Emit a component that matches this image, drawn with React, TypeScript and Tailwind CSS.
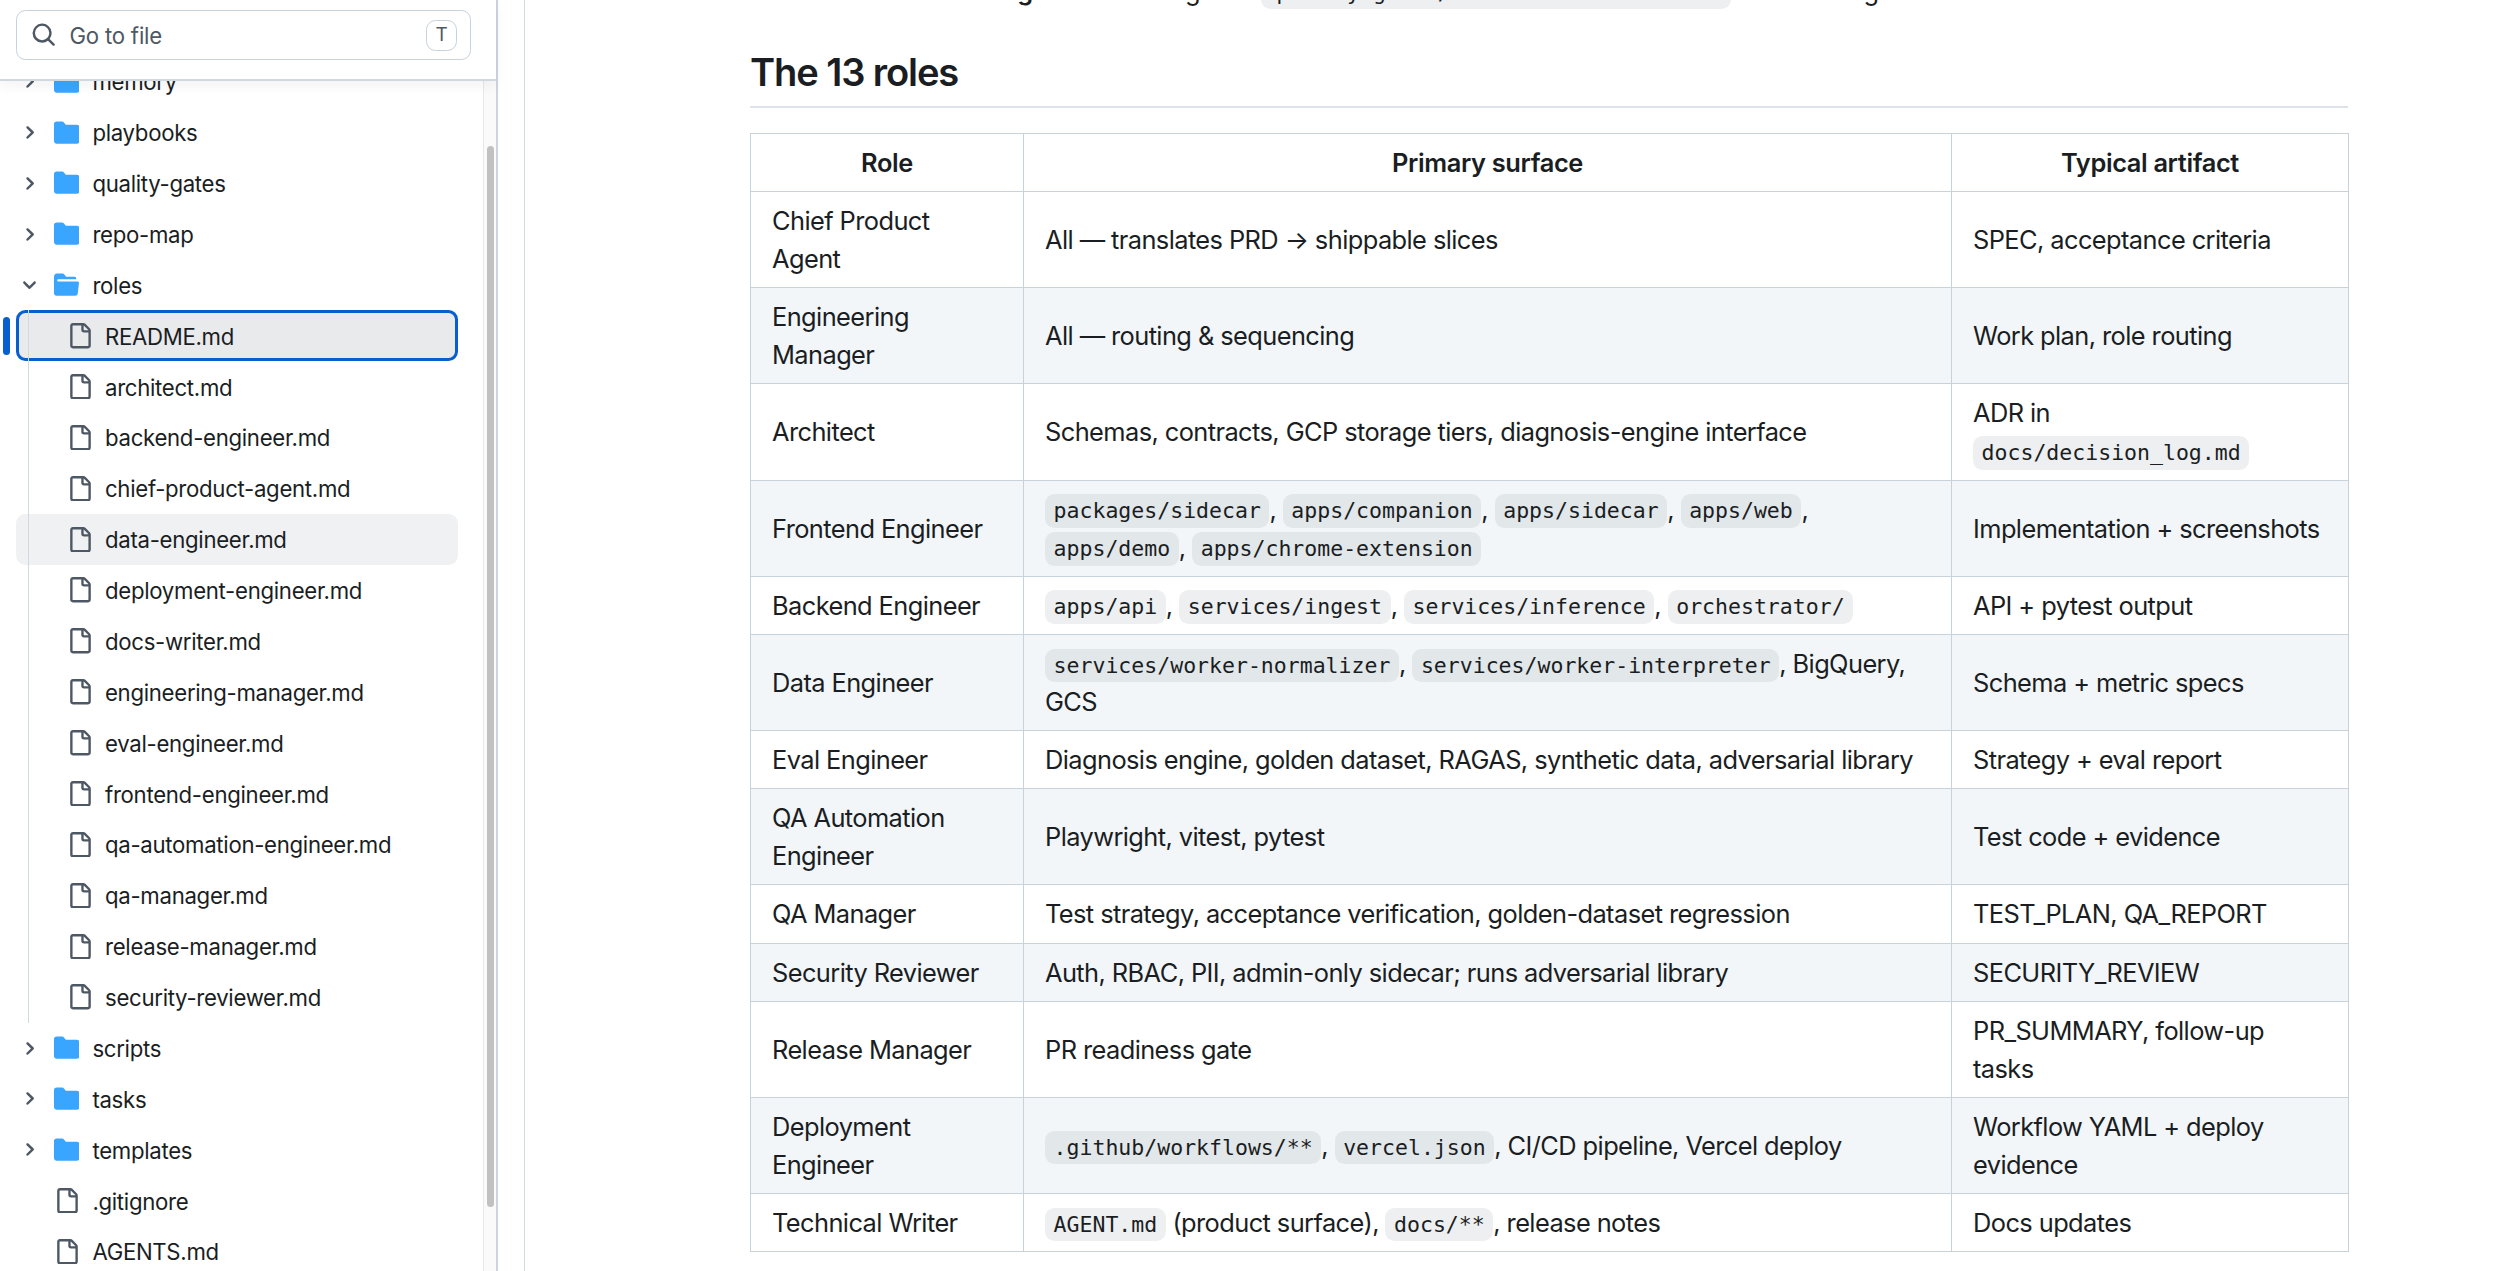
import type { ReactNode } from "react";

const FILE_PATH =
  "M2 1.75C2 .784 2.784 0 3.75 0h6.586c.464 0 .909.184 1.237.513l2.914 2.914c.329.328.513.773.513 1.237v9.586A1.75 1.75 0 0 1 13.25 16h-9.5A1.75 1.75 0 0 1 2 14.25Zm1.75-.25a.25.25 0 0 0-.25.25v12.5c0 .138.112.25.25.25h9.5a.25.25 0 0 0 .25-.25V6h-2.75A1.75 1.75 0 0 1 9 4.25V1.5Zm6.75.062V4.25c0 .138.112.25.25.25h2.688l-.011-.013-2.914-2.914-.013-.011Z";
const FOLDER_PATH =
  "M1.75 1A1.75 1.75 0 0 0 0 2.75v10.5C0 14.216.784 15 1.75 15h12.5A1.75 1.75 0 0 0 16 13.25v-8.5A1.75 1.75 0 0 0 14.25 3H7.5a.25.25 0 0 1-.2-.1l-.9-1.2C6.07 1.26 5.55 1 5 1H1.75Z";
const FOLDER_OPEN_PATH =
  "M.513 1.513A1.75 1.75 0 0 1 1.75 1h3.5c.55 0 1.07.26 1.4.7l.9 1.2a.25.25 0 0 0 .2.1H13a1 1 0 0 1 1 1v.5H2.75a.75.75 0 0 0 0 1.5h11.978a1 1 0 0 1 .994 1.117L15 13.25A1.75 1.75 0 0 1 13.25 15H1.75A1.75 1.75 0 0 1 0 13.25V2.75c0-.464.184-.91.513-1.237Z";
const CHEVRON_RIGHT_PATH =
  "M4.7 10c-.2 0-.4-.1-.5-.2-.3-.3-.3-.8 0-1.1L6.9 6 4.2 3.3c-.3-.3-.3-.8 0-1.1.3-.3.8-.3 1.1 0l3.3 3.2c.3.3.3.8 0 1.1L5.3 9.7c-.2.2-.4.3-.6.3Z";
const CHEVRON_DOWN_PATH =
  "M6 8.825c-.2 0-.4-.1-.5-.2l-3.3-3.3c-.3-.3-.3-.8 0-1.1.3-.3.8-.3 1.1 0l2.7 2.7 2.7-2.7c.3-.3.8-.3 1.1 0 .3.3.3.8 0 1.1l-3.2 3.2c-.2.2-.4.3-.6.3Z";
const SEARCH_PATH =
  "M10.68 11.74a6 6 0 0 1-7.922-8.982 6 6 0 0 1 8.982 7.922l3.04 3.04a.749.749 0 0 1-.326 1.275.749.749 0 0 1-.734-.215ZM11.5 7a4.499 4.499 0 1 0-8.997 0A4.499 4.499 0 0 0 11.5 7Z";

function Icon({ path, className }: { path: string; className: string }) {
  return (
    <svg
      viewBox="0 0 16 16"
      fill="currentColor"
      className={`size-[25.4px] shrink-0 ${className}`}
    >
      <path d={path} />
    </svg>
  );
}

function Chevron({ path }: { path: string }) {
  return (
    <svg
      viewBox="0 0 12 12"
      fill="currentColor"
      className="-ml-[0.5px] size-[19px] shrink-0 text-[#4d5864]"
    >
      <path d={path} />
    </svg>
  );
}

function Code({ children }: { children: ReactNode }) {
  return (
    <code className="rounded-[9.5px] bg-[#818b98]/14 px-[8.6px] py-[4.3px] font-['DejaVu_Sans_Mono',monospace] text-[21.53px] leading-none tracking-normal whitespace-nowrap">
      {children}
    </code>
  );
}

const roleFiles = [
  "README.md",
  "architect.md",
  "backend-engineer.md",
  "chief-product-agent.md",
  "data-engineer.md",
  "deployment-engineer.md",
  "docs-writer.md",
  "engineering-manager.md",
  "eval-engineer.md",
  "frontend-engineer.md",
  "qa-automation-engineer.md",
  "qa-manager.md",
  "release-manager.md",
  "security-reviewer.md",
];

type RoleRow = {
  role: string;
  surface: ReactNode;
  artifact: ReactNode;
  tall?: boolean;
};

const roles: RoleRow[] = [
  {
    role: "Chief Product Agent",
    surface: "All — translates PRD → shippable slices",
    artifact: "SPEC, acceptance criteria",
    tall: true,
  },
  {
    role: "Engineering Manager",
    surface: "All — routing & sequencing",
    artifact: "Work plan, role routing",
    tall: true,
  },
  {
    role: "Architect",
    surface: "Schemas, contracts, GCP storage tiers, diagnosis-engine interface",
    artifact: (
      <>
        ADR in <br />
        <Code>docs/decision_log.md</Code>
      </>
    ),
    tall: true,
  },
  {
    role: "Frontend Engineer",
    surface: (
      <>
        <Code>packages/sidecar</Code>, <Code>apps/companion</Code>,{" "}
        <Code>apps/sidecar</Code>, <Code>apps/web</Code>, <br />
        <Code>apps/demo</Code>, <Code>apps/chrome-extension</Code>
      </>
    ),
    artifact: "Implementation + screenshots",
    tall: true,
  },
  {
    role: "Backend Engineer",
    surface: (
      <>
        <Code>apps/api</Code>, <Code>services/ingest</Code>,{" "}
        <Code>services/inference</Code>, <Code>orchestrator/</Code>
      </>
    ),
    artifact: "API + pytest output",
  },
  {
    role: "Data Engineer",
    surface: (
      <>
        <Code>services/worker-normalizer</Code>,{" "}
        <Code>services/worker-interpreter</Code>, BigQuery, <br />
        GCS
      </>
    ),
    artifact: "Schema + metric specs",
    tall: true,
  },
  {
    role: "Eval Engineer",
    surface:
      "Diagnosis engine, golden dataset, RAGAS, synthetic data, adversarial library",
    artifact: "Strategy + eval report",
  },
  {
    role: "QA Automation Engineer",
    surface: "Playwright, vitest, pytest",
    artifact: "Test code + evidence",
    tall: true,
  },
  {
    role: "QA Manager",
    surface: "Test strategy, acceptance verification, golden-dataset regression",
    artifact: "TEST_PLAN, QA_REPORT",
  },
  {
    role: "Security Reviewer",
    surface: "Auth, RBAC, PII, admin-only sidecar; runs adversarial library",
    artifact: "SECURITY_REVIEW",
  },
  {
    role: "Release Manager",
    surface: "PR readiness gate",
    artifact: "PR_SUMMARY, follow-up tasks",
    tall: true,
  },
  {
    role: "Deployment Engineer",
    surface: (
      <>
        <Code>.github/workflows/**</Code>, <Code>vercel.json</Code>, CI/CD
        pipeline, Vercel deploy
      </>
    ),
    artifact: "Workflow YAML + deploy evidence",
    tall: true,
  },
  {
    role: "Technical Writer",
    surface: (
      <>
        <Code>AGENT.md</Code> (product surface), <Code>docs/**</Code>, release
        notes
      </>
    ),
    artifact: "Docs updates",
  },
];

function FolderRow({ name, open }: { name: string; open?: boolean }) {
  return (
    <li className="flex h-[50.88px] items-center pl-5">
      <Chevron path={open ? CHEVRON_DOWN_PATH : CHEVRON_RIGHT_PATH} />
      <Icon
        path={open ? FOLDER_OPEN_PATH : FOLDER_PATH}
        className="ml-[15.5px] text-[#3aa5ff]"
      />
      <span className="mt-px ml-[13px]">{name}</span>
    </li>
  );
}

function RoleFileRow({ name }: { name: string }) {
  const active = name === "README.md";
  const hovered = name === "data-engineer.md";
  return (
    <li
      className={`relative flex h-[50.88px] items-center rounded-[9.5px] pl-[50.6px] ${
        active
          ? "bg-[#e9eaec] outline-3 -outline-offset-3 outline-[#0860d0]"
          : hovered
            ? "bg-[#f0f1f3]"
            : ""
      }`}
    >
      {active && (
        <span className="absolute top-[6.5px] -left-[12.7px] h-[38px] w-[6.3px] rounded-full bg-[#0860d0]" />
      )}
      <Icon path={FILE_PATH} className="text-[#4d5864]" />
      <span className="mt-px ml-[13px]">{name}</span>
    </li>
  );
}

function FileRow({ name }: { name: string }) {
  return (
    <li className="flex h-[50.88px] items-center pl-[54px]">
      <Icon path={FILE_PATH} className="text-[#4d5864]" />
      <span className="mt-px ml-[13px]">{name}</span>
    </li>
  );
}

function Sidebar() {
  return (
    <aside className="flex w-[498px] shrink-0 flex-col border-r-2 border-[#ccd5dd]">
      <div className="z-10 h-[81px] shrink-0 border-b-2 border-[#d1d9e0] bg-white px-4 pt-[10px] shadow-[0_4px_12px_rgba(37,41,46,0.06)]">
        <div className="flex h-[50px] w-[455px] items-center rounded-[9.5px] border border-[#c8d2db] pr-[13px] pl-[14px] text-[#4d5864]">
          <Icon path={SEARCH_PATH} className="" />
          <span className="mt-px ml-[13px] flex-1 text-[22.2px]">
            Go to file
          </span>
          <kbd className="flex h-[31px] w-[31px] items-center justify-center rounded-[9.5px] border border-[#c8d2db] font-[Inter,sans-serif] text-[19px]">
            T
          </kbd>
        </div>
      </div>
      <div className="flex min-h-0 flex-1 overflow-hidden">
        <ul className="-mt-[25px] min-w-0 flex-1 text-[22.2px] tracking-[-0.3px] text-[#1a1e23]">
          <FolderRow name="memory" />
          <FolderRow name="playbooks" />
          <FolderRow name="quality-gates" />
          <FolderRow name="repo-map" />
          <FolderRow name="roles" open />
          <li className="relative pr-[25px] pl-4">
            <ul>
              {roleFiles.map((name) => (
                <RoleFileRow key={name} name={name} />
              ))}
            </ul>
            <span className="absolute top-0 bottom-0 left-[27.5px] w-px bg-[#d1d9e0]" />
          </li>
          <FolderRow name="scripts" />
          <FolderRow name="tasks" />
          <FolderRow name="templates" />
          <FileRow name=".gitignore" />
          <FileRow name="AGENTS.md" />
        </ul>
        <div className="w-[13px] border-l border-[#e8e8e8] bg-[#fafafa] pt-[65px] pl-[3px]">
          <div className="h-[1061px] w-[7px] rounded-full bg-[#c1c1c1]" />
        </div>
      </div>
    </aside>
  );
}

export default function App() {
  return (
    <div className="flex h-[1271px] w-[2500px] overflow-hidden bg-white font-[Inter,sans-serif] tracking-[-0.2px] text-[#1a1e23]">
      <Sidebar />
      <main className="ml-[26px] min-w-0 flex-1 border-l border-[#d1d9e0] pl-[225px] text-[25.4px] leading-[38.15px] tracking-[-0.58px]">
        <p className="-mt-[28px] h-[38px] pl-[52px] whitespace-nowrap">
          The <strong className="font-semibold">Release Manager</strong>{" "}
          validates against <Code>quality-gates/definition-of-done.md</Code>{" "}
          before merge.
        </p>
        <h2 className="mt-[39px] h-[59px] w-[1598px] border-b-2 border-[#dde3e8] text-[38.1px] leading-[47px] font-semibold tracking-[-1.1px]">
          The 13 roles
        </h2>
        <table className="mt-[25px] w-[1598px] table-fixed border-collapse">
          <colgroup>
            <col className="w-[273px]" />
            <col className="w-[928px]" />
            <col className="w-[397px]" />
          </colgroup>
          <thead>
            <tr className="h-[58.2px]">
              {["Role", "Primary surface", "Typical artifact"].map((title) => (
                <th
                  key={title}
                  className="border border-[#c8d2db] pt-px font-semibold tracking-[-0.36px]"
                >
                  {title}
                </th>
              ))}
            </tr>
          </thead>
          <tbody>
            {roles.map((row) => (
              <tr
                key={row.role}
                className={`even:bg-[#f3f6f9] ${row.tall ? "h-[96.15px]" : "h-[58.2px]"}`}
              >
                <td className="border border-[#c8d2db] px-[21px] pt-px">
                  {row.role}
                </td>
                <td className="border border-[#c8d2db] px-[21px] pt-px">
                  {row.surface}
                </td>
                <td className="border border-[#c8d2db] px-[21px] pt-px">
                  {row.artifact}
                </td>
              </tr>
            ))}
          </tbody>
        </table>
      </main>
    </div>
  );
}
